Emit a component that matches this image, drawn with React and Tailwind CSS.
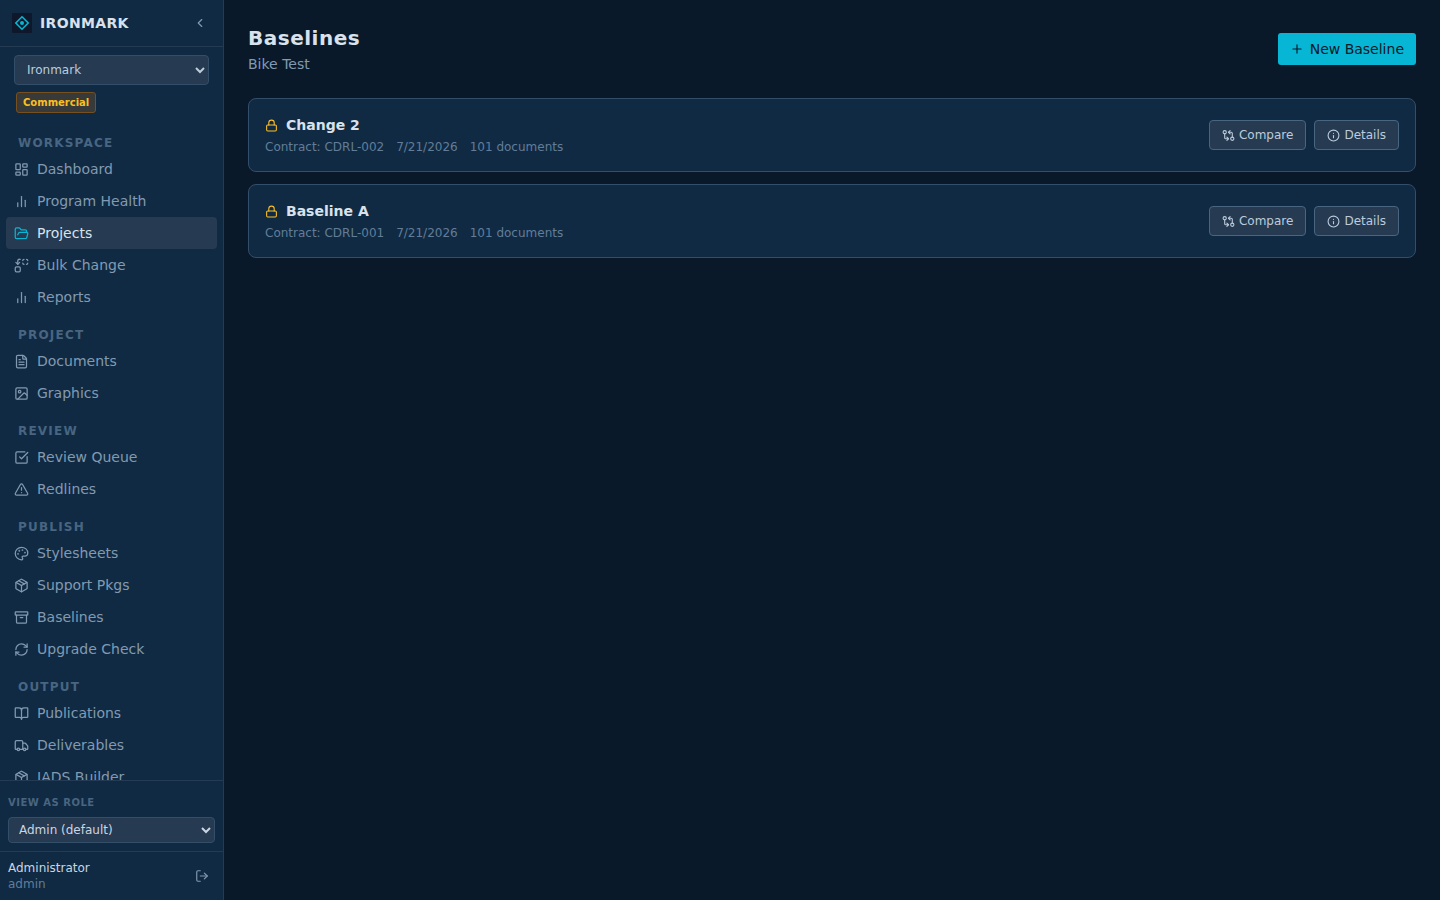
import { useState } from 'react';
import {
  Archive, BookOpen, ChevronLeft, FileText, FolderOpen, GitCompareArrows,
  Image, Info, LayoutDashboard, Lock, LogOut, Package, Palette, Plus, RefreshCw,
  SquareCheckBig, TriangleAlert, Truck
} from 'lucide-react';

const navSections = [
  {
    title: 'Workspace',
    items: [
      { label: 'Dashboard', icon: LayoutDashboard },
      { label: 'Program Health', icon: BarsIcon },
      { label: 'Projects', icon: FolderOpen },
      { label: 'Bulk Change', icon: ReplaceIcon },
      { label: 'Reports', icon: BarsIcon },
    ],
  },
  {
    title: 'Project',
    items: [
      { label: 'Documents', icon: FileText },
      { label: 'Graphics', icon: Image },
    ],
  },
  {
    title: 'Review',
    items: [
      { label: 'Review Queue', icon: SquareCheckBig },
      { label: 'Redlines', icon: TriangleAlert },
    ],
  },
  {
    title: 'Publish',
    items: [
      { label: 'Stylesheets', icon: Palette },
      { label: 'Support Pkgs', icon: Package },
      { label: 'Baselines', icon: Archive },
      { label: 'Upgrade Check', icon: RefreshCw },
    ],
  },
  {
    title: 'Output',
    items: [
      { label: 'Publications', icon: BookOpen },
      { label: 'Deliverables', icon: Truck },
      { label: 'IADS Builder', icon: Package },
    ],
  },
];

const baselines = [
  { id: 2, name: 'Change 2', contract: 'CDRL-002', date: '7/21/2026', documents: 101 },
  { id: 1, name: 'Baseline A', contract: 'CDRL-001', date: '7/21/2026', documents: 101 },
];

export default function App() {
  return (
    <div className="flex h-screen overflow-hidden bg-[#0a1929] font-['DejaVu_Sans',sans-serif] text-[#d9e2ec]">
      <Sidebar />
      <main className="min-w-0 flex-1 overflow-y-auto p-6">
        {/* Page Heading */}
        <div className="mb-6 flex items-center justify-between">
          <div>
            <h1 className="text-xl leading-7 font-bold tracking-wide">Baselines</h1>
            <p className="mt-0.5 text-sm text-[#829ab1]">Bike Test</p>
          </div>
          <button type="button" className="flex h-8 items-center gap-1.5 rounded-[3px] bg-[#06b6d4] px-3 text-sm text-[#0a1929]">
            <Plus size={14} /> New Baseline
          </button>
        </div>

        <div className="space-y-3">
          {baselines.map(b => <BaselineCard key={b.id} baseline={b} />)}
        </div>
      </main>
    </div>
  );
}

function Sidebar() {
  const [active, setActive] = useState('Projects');

  return (
    <aside className="flex w-56 shrink-0 flex-col border-r border-[#243b53] bg-[#102a43]">
      {/* Brand */}
      <div className="flex h-[47px] shrink-0 items-center gap-2 border-b border-[#243b53] px-3">
        <Logo />
        <span className="flex-1 text-sm font-bold tracking-wide">IRONMARK</span>
        <button type="button" aria-label="Collapse sidebar" className="p-1 text-[#829ab1]">
          <ChevronLeft size={14} />
        </button>
      </div>

      {/* Organization */}
      <div className="shrink-0 px-3.5 pt-2 pb-2">
        <select aria-label="Organization" className="block h-[30px] w-full rounded border border-[#334e68] bg-[#263a52] px-2 text-xs text-[#bcccdc]">
          <option>Ironmark</option>
        </select>
        <span className="mt-[7px] ml-0.5 flex h-[21px] w-fit items-center rounded-[3px] border border-[#78501f] bg-[#373a38] px-1.5 text-[10px] font-bold text-[#fbbf24]">
          Commercial
        </span>
      </div>

      <nav className="min-h-0 flex-1 overflow-y-auto px-1.5 [scrollbar-width:none]">
        {navSections.map(section => (
          <div key={section.title} className="pt-3">
            <h2 className="px-3 pt-0.5 pb-0.5 text-xs font-bold tracking-widest text-[#486581] uppercase">{section.title}</h2>
            {section.items.map(({ label, icon: Icon }) => (
              <a
                key={label}
                href="#"
                onClick={() => setActive(label)}
                className={`flex h-8 items-center gap-2 rounded px-2 text-sm ${active === label ? 'bg-[#263a52] text-[#d9e2ec]' : 'text-[#829ab1]'}`}
              >
                <Icon size={15} className={active === label ? 'text-[#06b6d4]' : ''} />
                {label}
              </a>
            ))}
          </div>
        ))}
      </nav>

      {/* Role switcher */}
      <div className="shrink-0 border-t border-[#243b53] px-2 pt-3.5 pb-2">
        <label htmlFor="role" className="block text-[10px] leading-4 font-bold tracking-wider text-[#486581] uppercase">View as role</label>
        <select id="role" className="mt-1.5 block h-[26px] w-full rounded border border-[#334e68] bg-[#263a52] px-1.5 text-xs text-[#cbd5e1]">
          <option>Admin (default)</option>
        </select>
      </div>

      {/* Signed-in user */}
      <div className="flex h-[49px] shrink-0 items-center justify-between border-t border-[#243b53] px-2">
        <div className="text-xs">
          <p className="text-[#cbd5e1]">Administrator</p>
          <p className="text-[#627d98]">admin</p>
        </div>
        <button type="button" aria-label="Sign out" className="p-1.5 text-[#829ab1]">
          <LogOut size={14} />
        </button>
      </div>
    </aside>
  );
}

function BaselineCard({ baseline }) {
  const btn = 'flex h-[30px] items-center gap-1 rounded border border-[#486581] bg-[#263a52] px-3 text-xs text-[#bcccdc]';

  return (
    <div className="flex h-[74px] items-center justify-between rounded-lg border border-[#334e68] bg-[#102a43] px-4">
      <div>
        <div className="flex items-center gap-2">
          <Lock size={13} className="text-[#fbbf24]" />
          <h3 className="text-sm font-bold">{baseline.name}</h3>
        </div>
        <div className="mt-1 flex gap-3 text-xs text-[#627d98]">
          <span>Contract: {baseline.contract}</span>
          <span>{baseline.date}</span>
          <span>{baseline.documents} documents</span>
        </div>
      </div>
      <div className="flex gap-2">
        <button type="button" className={btn}><GitCompareArrows size={13} /> Compare</button>
        <button type="button" className={btn}><Info size={13} /> Details</button>
      </div>
    </div>
  );
}

function Logo() {
  return (
    <svg width="20" height="20" viewBox="0 0 20 20" fill="none" aria-hidden="true">
      <rect width="20" height="20" rx="1" fill="#0f172a" />
      <path d="M10 3.8 16.2 10 10 16.2 3.8 10Z" stroke="#06b6d4" strokeWidth="1.6" />
      <circle cx="10" cy="10" r="2" fill="#06b6d4" />
    </svg>
  );
}

function BarsIcon({ size, className }) {
  return (
    <svg width={size} height={size} viewBox="0 0 24 24" fill="none" stroke="currentColor" strokeWidth="2" strokeLinecap="round" strokeLinejoin="round" className={className} aria-hidden="true">
      <path d="M18 20V10" />
      <path d="M12 20V4" />
      <path d="M6 20v-6" />
    </svg>
  );
}

function ReplaceIcon({ size, className }) {
  return (
    <svg width={size} height={size} viewBox="0 0 24 24" fill="none" stroke="currentColor" strokeWidth="2" strokeLinecap="round" strokeLinejoin="round" className={className} aria-hidden="true">
      <path d="M14 4c0-1.1.9-2 2-2" />
      <path d="M20 2c1.1 0 2 .9 2 2" />
      <path d="M22 8c0 1.1-.9 2-2 2" />
      <path d="M16 10c-1.1 0-2-.9-2-2" />
      <path d="m3 7 3 3 3-3" />
      <path d="M6 10V5c0-1.7 1.3-3 3-3h1" />
      <rect width="8" height="8" x="2" y="14" rx="2" />
    </svg>
  );
}
